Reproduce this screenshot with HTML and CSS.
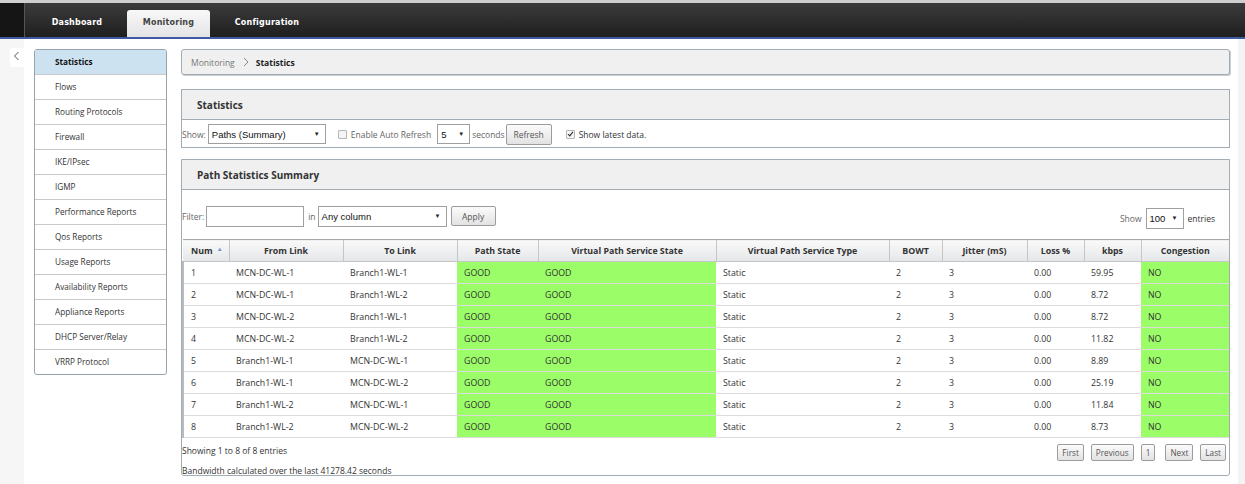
FILE: index.html
```html
<!DOCTYPE html>
<html>
<head>
<meta charset="utf-8">
<link rel="stylesheet" href="styles.css">
</head>
<body>
<div class="topbar">
  <div class="logo"></div>
  <nav class="tabs">
    <span class="tab">Dashboard</span>
    <span class="tab active">Monitoring</span>
    <span class="tab">Configuration</span>
  </nav>
</div>
<div class="layout">
  <div class="gutter">
    <div class="collapse"><svg width="8" height="10" viewBox="0 0 8 10"><path d="M5.5 1 L1.5 5 L5.5 9" fill="none" stroke="#555" stroke-width="1"/></svg></div>
  </div>
  <aside class="sidebar">
    <div class="item active">Statistics</div>
    <div class="item">Flows</div>
    <div class="item">Routing Protocols</div>
    <div class="item">Firewall</div>
    <div class="item">IKE/IPsec</div>
    <div class="item">IGMP</div>
    <div class="item">Performance Reports</div>
    <div class="item">Qos Reports</div>
    <div class="item">Usage Reports</div>
    <div class="item">Availability Reports</div>
    <div class="item">Appliance Reports</div>
    <div class="item">DHCP Server/Relay</div>
    <div class="item last">VRRP Protocol</div>
  </aside>
  <main class="main">
    <div class="crumb"><span class="crumb-link">Monitoring</span><svg class="chev" width="8" height="10" viewBox="0 0 8 10"><path d="M2 1 L6 5 L2 9" fill="none" stroke="#888" stroke-width="1"/></svg><b>Statistics</b></div>

    <section class="panel stats">
      <div class="panel-head">Statistics</div>
      <div class="controls">
        <span class="lbl muted">Show:</span>
        <span class="sel sel-show">Paths (Summary)<i class="arr">&#9660;</i></span>
        <span class="chk"></span>
        <span class="lbl muted">Enable Auto Refresh</span>
        <span class="sel sel-5">5<i class="arr">&#9660;</i></span>
        <span class="lbl muted">seconds</span>
        <span class="btn btn-refresh">Refresh</span>
        <span class="chk checked"><svg width="8" height="8" viewBox="0 0 8 8"><path d="M1.2 4.2 L3.2 6.2 L6.8 1.6" fill="none" stroke="#333" stroke-width="1.3"/></svg></span>
        <span class="lbl">Show latest data.</span>
      </div>
    </section>

    <section class="panel summary">
      <div class="panel-head">Path Statistics Summary</div>
      <div class="filter-row">
        <div class="filter-left">
          <span class="lbl muted">Filter:</span>
          <span class="input"></span>
          <span class="lbl muted">in</span>
          <span class="sel sel-col">Any column<i class="arr">&#9660;</i></span>
          <span class="btn btn-apply">Apply</span>
        </div>
        <div class="filter-right">
          <span class="lbl muted">Show</span>
          <span class="sel sel-100">100<i class="arr">&#9660;</i></span>
          <span class="lbl">entries</span>
        </div>
      </div>
      <table class="grid">
        <colgroup>
          <col style="width:46px"><col style="width:114px"><col style="width:114px"><col style="width:81px"><col style="width:178px"><col style="width:173px"><col style="width:53px"><col style="width:85px"><col style="width:57px"><col style="width:57px"><col>
        </colgroup>
        <thead>
          <tr>
            <th class="num">Num <i class="sort">&#9650;</i></th>
            <th>From Link</th>
            <th>To Link</th>
            <th>Path State</th>
            <th>Virtual Path Service State</th>
            <th>Virtual Path Service Type</th>
            <th>BOWT</th>
            <th>Jitter (mS)</th>
            <th>Loss %</th>
            <th>kbps</th>
            <th>Congestion</th>
          </tr>
        </thead>
        <tbody>
          <tr><td>1</td><td>MCN-DC-WL-1</td><td>Branch1-WL-1</td><td class="g">GOOD</td><td class="g">GOOD</td><td>Static</td><td>2</td><td>3</td><td>0.00</td><td>59.95</td><td class="g">NO</td></tr>
          <tr><td>2</td><td>MCN-DC-WL-1</td><td>Branch1-WL-2</td><td class="g">GOOD</td><td class="g">GOOD</td><td>Static</td><td>2</td><td>3</td><td>0.00</td><td>8.72</td><td class="g">NO</td></tr>
          <tr><td>3</td><td>MCN-DC-WL-2</td><td>Branch1-WL-1</td><td class="g">GOOD</td><td class="g">GOOD</td><td>Static</td><td>2</td><td>3</td><td>0.00</td><td>8.72</td><td class="g">NO</td></tr>
          <tr><td>4</td><td>MCN-DC-WL-2</td><td>Branch1-WL-2</td><td class="g">GOOD</td><td class="g">GOOD</td><td>Static</td><td>2</td><td>3</td><td>0.00</td><td>11.82</td><td class="g">NO</td></tr>
          <tr><td>5</td><td>Branch1-WL-1</td><td>MCN-DC-WL-1</td><td class="g">GOOD</td><td class="g">GOOD</td><td>Static</td><td>2</td><td>3</td><td>0.00</td><td>8.89</td><td class="g">NO</td></tr>
          <tr><td>6</td><td>Branch1-WL-1</td><td>MCN-DC-WL-2</td><td class="g">GOOD</td><td class="g">GOOD</td><td>Static</td><td>2</td><td>3</td><td>0.00</td><td>25.19</td><td class="g">NO</td></tr>
          <tr><td>7</td><td>Branch1-WL-2</td><td>MCN-DC-WL-1</td><td class="g">GOOD</td><td class="g">GOOD</td><td>Static</td><td>2</td><td>3</td><td>0.00</td><td>11.84</td><td class="g">NO</td></tr>
          <tr><td>8</td><td>Branch1-WL-2</td><td>MCN-DC-WL-2</td><td class="g">GOOD</td><td class="g">GOOD</td><td>Static</td><td>2</td><td>3</td><td>0.00</td><td>8.73</td><td class="g">NO</td></tr>
        </tbody>
      </table>
      <div class="foot">
        <div class="foot-text">
          <div class="info">Showing 1 to 8 of 8 entries</div>
          <div class="info">Bandwidth calculated over the last 41278.42 seconds</div>
        </div>
        <div class="pager">
          <span class="btn pg">First</span>
          <span class="btn pg">Previous</span>
          <span class="btn pg cur">1</span>
          <span class="btn pg next">Next</span>
          <span class="btn pg">Last</span>
        </div>
      </div>
    </section>
  </main>
  <div class="rstrip"></div>
</div>
</body>
</html>
```
FILE: styles.css
```css
* { box-sizing: border-box; }
html, body { margin: 0; padding: 0; }
body {
  width: 1245px;
  height: 484px;
  overflow: hidden;
  background: #fff;
  font-family: "Open Sans", "Noto Sans", sans-serif;
  font-size: 8.5px;
  color: #333;
}

/* top bar */
.topbar {
  height: 39px;
  border-top: 3px solid #cfcfcf;
  background: linear-gradient(#3b3b3b, #1f1f1f);
  border-bottom: 2px solid #3d5aa3;
  display: flex;
}
.logo {
  width: 25px;
  background-color: #151515;
  background-image: radial-gradient(#2a2a3a 0.6px, transparent 0.7px);
  background-size: 2px 2px;
  border-right: 1px solid #555;
}
.tabs {
  display: flex;
  align-items: flex-end;
  padding-left: 2px;
}
.tab {
  display: flex;
  align-items: center;
  justify-content: center;
  height: 27px;
  color: #fff;
  font-family: "DejaVu Sans", sans-serif;
  font-weight: bold;
  font-size: 8px;
  letter-spacing: 0.2px;
  padding: 0 0 3px;
  width: 100px;
}
.tab.active {
  width: 83px;
  background: linear-gradient(#f8f8f8, #e4e4e8);
  color: #444;
  border-radius: 3px 3px 0 0;
}
.tab:last-child { width: 114px; }

/* layout */
.layout {
  display: flex;
  height: 445px;
}
.gutter {
  width: 24px;
  background: #f6f6f6;
  padding-top: 9px;
  display: flex;
  justify-content: flex-end;
  align-items: flex-start;
}
.collapse {
  width: 14px;
  height: 19px;
  background: #fff;
  border-radius: 3px 0 0 3px;
  display: flex;
  align-items: center;
  justify-content: center;
  padding-bottom: 3px;
}

/* sidebar */
.sidebar {
  margin: 10px 0 0 10px;
  width: 133px;
  align-self: flex-start;
  border: 1px solid #98a2aa;
  border-radius: 3px;
  overflow: hidden;
}
.item {
  height: 25px;
  line-height: 24px;
  padding-left: 20px;
  border-bottom: 1px solid #c9c9c9;
  color: #333;
  white-space: nowrap;
  font-size: 8.2px;
}
.item.last { border-bottom: none; height: 24px; }
.item.active {
  background: #cde2f1;
  font-weight: bold;
  color: #111;
}

/* main */
.main {
  width: 1049px;
  margin-left: 14px;
  padding-top: 10px;
}
.crumb {
  height: 26px;
  border: 1px solid #a3acb3;
  border-radius: 3px;
  background: #f0f0f0;
  display: flex;
  align-items: center;
  padding-left: 9px;
  box-shadow: 1px 1px 0 #c8cdd2;
}
.crumb-link { color: #777; }
.chev { margin: 0 6px 0 7px; }
.crumb b { color: #222; }

.panel {
  border: 1px solid #a3acb3;
  background: #fff;
}
.stats { margin-top: 14px; height: 59px; }
.summary { margin-top: 11px; height: 317px; border-radius: 0 0 3px 3px; }
.panel-head {
  height: 30px;
  background: #f0f0f0;
  border-bottom: 1px solid #a3acb3;
  font-weight: bold;
  font-size: 10px;
  color: #333;
  display: flex;
  align-items: center;
  padding-left: 15px;
}
.controls {
  height: 27px;
  display: flex;
  align-items: center;
  padding-top: 1px;
}
.lbl { white-space: nowrap; }
.muted { color: #666; }
.sel {
  position: relative;
  display: inline-flex;
  align-items: center;
  height: 20px;
  border: 1px solid #a0a0a0;
  background: #fff;
  color: #111;
  padding-left: 3px;
  font-family: "Liberation Sans", sans-serif;
  font-size: 9.5px;
}
.arr {
  position: absolute;
  right: 5px;
  top: 6px;
  font-style: normal;
  font-size: 6px;
  color: #222;
}
.sel-show { width: 118px; margin-left: 2px; }
.chk {
  width: 9px;
  height: 9px;
  border: 1px solid #b5b5b5;
  background: #f4f4f4;
  border-radius: 1px;
  display: inline-flex;
  align-items: center;
  justify-content: center;
}
.controls .chk { margin: 0 4px 0 12px; }
.controls .chk.checked { margin-left: 14px; }
.sel-5 { width: 33px; margin: 0 2px 0 6px; }
.btn {
  display: inline-flex;
  align-items: center;
  justify-content: center;
  border: 1px solid #9c9c9c;
  border-radius: 2px;
  background: linear-gradient(#fbfbfb, #e2e2e2);
  color: #555;
  white-space: nowrap;
}
.btn-refresh { width: 46px; height: 21px; margin-left: 1px; }

.filter-row {
  display: flex;
  justify-content: space-between;
  align-items: center;
  height: 49px;
  padding-top: 3px;
}
.filter-left { display: flex; align-items: center; }
.input {
  width: 98px;
  height: 21px;
  border: 1px solid #a0a0a0;
  margin: 0 4px 0 2px;
}
.sel-col { width: 129px; height: 21px; margin-left: 2px; }
.btn-apply { width: 45px; height: 20px; margin-left: 4px; }
.filter-right { display: flex; align-items: center; padding-right: 14px; padding-top: 4px; }
.sel-100 { width: 38px; height: 21px; margin: 0 4px 0 4px; }

/* table */
.grid {
  width: 100%;
  border-collapse: collapse;
  table-layout: fixed;
  font-size: 8.8px;
}
.grid th {
  height: 22px;
  background: linear-gradient(#fafafa, #e5e6e8);
  border-top: 1px solid #a8a8a8;
  border-left: 1px solid #c6c6c6;
  border-bottom: 1px solid #c6c6c6;
  font-weight: bold;
  color: #333;
  text-align: center;
  padding: 0;
}
.grid th:first-child { border-left: none; }
.grid th.num { text-align: left; padding-left: 8px; }
.sort { font-style: normal; font-size: 6px; color: #7a8fcf; vertical-align: 3px; margin-left: 2px; }
.grid td {
  height: 22px;
  padding: 0 0 0 7px;
  border-bottom: 1px solid #dcdcdc;
  color: #333;
  white-space: nowrap;
}
.grid td:first-child { border-left: 2px solid #b8bcc0; }
.grid td.g { background: #9bfd68; }

.foot {
  display: flex;
  justify-content: space-between;
}
.foot-text { padding-top: 6px; }
.info { height: 20px; line-height: 14px; }
.pager { display: flex; padding: 6px 3px 0 0; align-items: flex-start; }
.pg { height: 17px; padding: 0 4px; margin-left: 7px; font-size: 8.2px; }
.pg.cur { padding: 0 4px; margin-left: 7px; }
.pg.next { margin-left: 10px; }

.rstrip {
  flex: 1;
  margin-left: 8px;
  background: #f4f4f4;
}
```
